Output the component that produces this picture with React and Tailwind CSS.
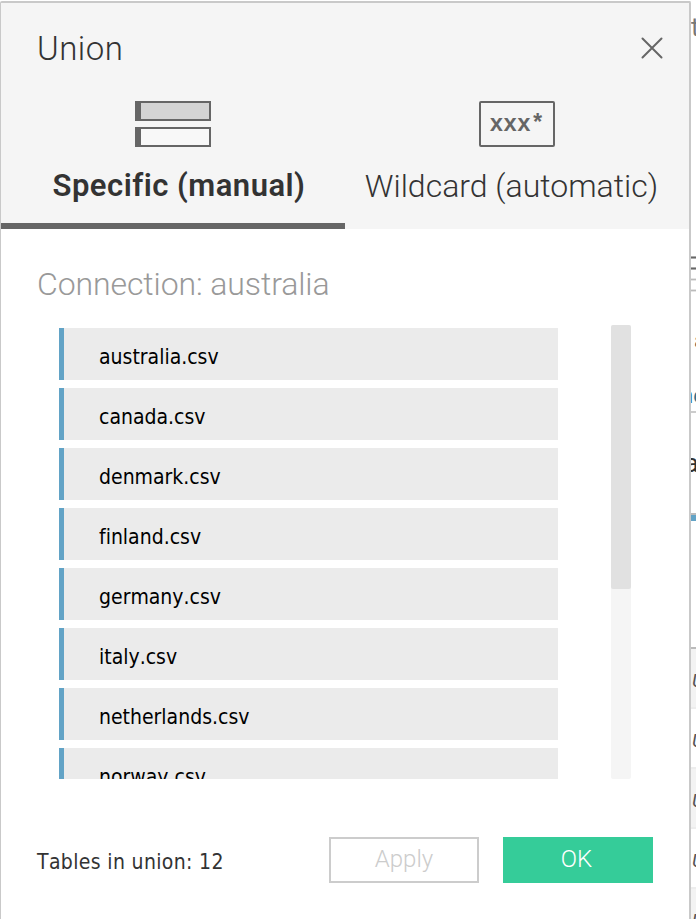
const files = [
  "australia.csv",
  "canada.csv",
  "denmark.csv",
  "finland.csv",
  "germany.csv",
  "italy.csv",
  "netherlands.csv",
  "norway.csv",
];

const light = "font-['Roboto',sans-serif] font-light whitespace-nowrap";
const tahoma =
  "font-['DejaVu_Sans_Condensed','DejaVu_Sans',sans-serif] [font-stretch:condensed] [font-kerning:none] [font-variant-ligatures:none] whitespace-nowrap";

function Header() {
  return (
    <header className="flex h-[226px] flex-col bg-[#f5f5f5]">
      <div className="flex h-[98px] items-start justify-between pl-9 pr-[26px]">
        <h1 className={`${light} pt-[26px] text-[33px] leading-[40px] tracking-[0.5px] text-[#333]`}>Union</h1>
        <svg className="mt-[34px] h-[22px] w-[22px]" viewBox="0 0 22 22" stroke="#666" strokeWidth="2" strokeLinecap="round">
          <path d="M1.5 1.5 L20.5 20.5 M20.5 1.5 L1.5 20.5" />
        </svg>
      </div>
      <div className="flex h-32">
        <button className="flex w-[344px] flex-col items-center border-b-6 border-[#666]">
          <span className="flex w-[76px] flex-col gap-1.5">
            <span className="h-5 border-2 border-l-6 border-[#666] bg-[#d4d4d4]" />
            <span className="h-5 border-2 border-l-6 border-[#666] bg-[#f8f8f8]" />
          </span>
          <span className="mt-[19px] pl-3 font-['Roboto',sans-serif] text-[31px] leading-[40px] font-semibold tracking-[0.48px] whitespace-nowrap text-[#333] [font-variant-ligatures:none]">
            Specific (manual)
          </span>
        </button>
        <button className="flex w-[344px] flex-col items-center">
          <span className="flex h-[46px] w-[76px] justify-center rounded-xs border-2 border-[#666] font-['Liberation_Mono',monospace] text-[23px] leading-[44px] font-bold text-[#666]">
            xxx*
          </span>
          <span className={`${light} mt-[19px] pr-[11px] text-[32px] leading-[40px] text-[#333]`}>
            Wildcard (automatic)
          </span>
        </button>
      </div>
    </header>
  );
}

function TableList() {
  return (
    <div className="flex h-[454px] justify-between pr-[58px] pl-[58px]">
      <ul className="flex w-[499px] flex-col gap-2 overflow-hidden pt-[3px]">
        {files.map((name) => (
          <li
            key={name}
            className={`${tahoma} h-[52px] shrink-0 border-l-5 border-[#62a3c6] bg-[#ebebeb] pl-[35px] text-[21px] leading-[58px] text-black`}
          >
            {name}
          </li>
        ))}
      </ul>
      <div className="w-5 rounded-xs bg-[#f5f5f5]">
        <div className="h-[264px] rounded-xs bg-[#e1e1e1]" />
      </div>
    </div>
  );
}

function Footer() {
  return (
    <footer className="mt-[58px] flex h-[46px] items-center pl-9">
      <span className={`${tahoma} w-[292px] pt-1.5 text-[21px] tracking-[0.35px] text-[#333]`}>Tables in union: 12</span>
      <button className={`${light} h-[46px] w-[150px] border-2 border-[#ccc] pb-0.5 text-[24px] leading-[38px] text-[#ccc]`}>
        Apply
      </button>
      <button className={`${light} ml-6 h-[46px] w-[150px] bg-[#35cc99] pr-[3px] pb-0.5 text-[24px] leading-[42px] text-white`}>
        OK
      </button>
    </footer>
  );
}

function Backdrop() {
  return (
    <aside className="flex w-[5px] flex-col overflow-hidden bg-white font-['Roboto',sans-serif]">
      <div className="h-[256px] shrink-0 pt-3 text-[25px] leading-[32px] text-[#777]">t</div>
      <div className="mb-2 h-[3px] shrink-0 border-y border-[#aaa] bg-[#666]" />
      <div className="mb-2 h-[3px] shrink-0 border-y border-[#aaa] bg-[#666]" />
      <div className="mb-2 h-[3px] shrink-0 border-y border-[#e4e4e4] bg-[#bbb]" />
      <div className="h-[3px] shrink-0 border-y border-[#e4e4e4] bg-[#bbb]" />
      <div className="h-[121px] shrink-0 border-b-2 border-[#ccc] pt-[34px]">
        <div className="pl-[3px] text-[22px] leading-[30px] text-[#555]">a</div>
        <div className="mt-[25px] -ml-[10px] text-[22px] leading-[30px] whitespace-nowrap text-[#31708f]">ne</div>
      </div>
      <div className="h-[102px] shrink-0 border-b-2 border-[#bbb] pt-[35px]">
        <div className="-ml-[6px] text-[25px] leading-[32px] text-[#333]">a</div>
      </div>
      <div className="h-1.5 shrink-0 bg-[#62a3c6]" />
      <div className="h-[128px] shrink-0 border-b-2 border-[#bbb]" />
      {[0, 1, 2, 3, 4].map((n) => (
        <div
          key={n}
          className="h-[60px] shrink-0 border-b-2 border-[#ededed] pt-[17px] pl-px text-[19px] leading-[30px] text-[#555] italic odd:bg-white even:bg-[#f3f3f3]"
        >
          U
        </div>
      ))}
    </aside>
  );
}

export default function App() {
  return (
    <div className="flex h-[919px] w-[696px] overflow-hidden bg-white">
      <div className="flex w-[691px] shrink-0 flex-col pt-px">
        <main className="flex h-[918px] flex-col rounded-t-xs border-t-2 border-r-2 border-l border-[#c9c9c9] bg-white">
          <Header />
          <h2 className={`${light} h-[96px] pt-[35px] pl-9 text-[32px] leading-[40px] tracking-[-0.1px] text-[#999]`}>
            Connection: australia
          </h2>
          <TableList />
          <Footer />
        </main>
      </div>
      <Backdrop />
    </div>
  );
}
